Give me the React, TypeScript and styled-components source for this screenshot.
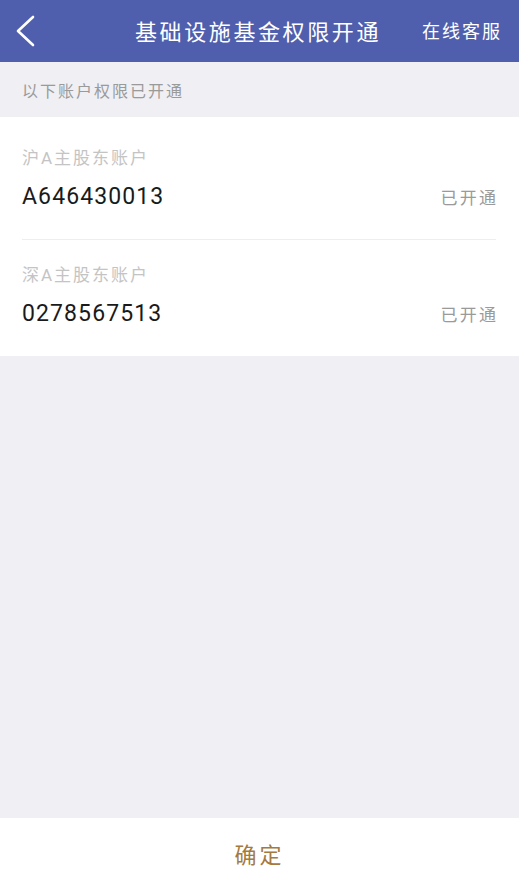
import React from "react";
import styled, { createGlobalStyle } from "styled-components";

const GlobalStyle = createGlobalStyle`
  html, body {
    margin: 0;
    padding: 0;
    background: #efeff4;
    font-family: Roboto, "Noto Sans CJK SC", sans-serif;
  }
`;

const Page = styled.div`
  width: 519px;
  height: 888px;
  display: flex;
  flex-direction: column;
  background: #efeff4;
`;

const Header = styled.div`
  height: 62px;
  background: #4f5fae;
  display: flex;
  align-items: center;
  color: #fff;
`;

const BackButton = styled.div`
  width: 58px;
  height: 62px;
  display: flex;
  align-items: center;
  padding-left: 14px;
  box-sizing: border-box;
`;

const Title = styled.div`
  flex: 1;
  text-align: center;
  font-size: 22px;
  letter-spacing: 2.6px;
  padding-left: 36px;
  margin-top: -3px;
`;

const HeaderLink = styled.div`
  font-size: 18px;
  letter-spacing: 2px;
  padding-right: 17px;
  margin-top: -3px;
`;

const Notice = styled.div`
  height: 55px;
  display: flex;
  align-items: center;
  padding-left: 22px;
  font-size: 16px;
  letter-spacing: 2px;
  color: #9a9a9a;
`;

const Card = styled.div`
  background: #fff;
  padding: 6px 23px 0 22px;
`;

const Row = styled.div<{ last?: boolean }>`
  padding: 24px 0 30px;
  border-bottom: ${(p) => (p.last ? "none" : "1px solid #eeeeee")};
`;

const Label = styled.div`
  font-size: 17px;
  letter-spacing: 2px;
  color: #c4c4c4;
  line-height: 22px;
`;

const Line = styled.div`
  display: flex;
  align-items: center;
  justify-content: space-between;
  margin-top: 14px;
  height: 26px;
`;

const Account = styled.div`
  font-size: 23px;
  letter-spacing: 1.1px;
  color: #1a1a1a;
`;

const Status = styled.div`
  font-size: 17px;
  letter-spacing: 2.3px;
  margin-right: -2.3px;
  color: #9a9a9a;
`;

const Spacer = styled.div`
  flex: 1;
`;

const Footer = styled.div`
  height: 70px;
  background: #fff;
  display: flex;
  align-items: center;
  justify-content: center;
  font-size: 22px;
  letter-spacing: 3px;
  color: #a47a3e;
`;

const accounts = [
  { label: "沪A主股东账户", no: "A646430013" },
  { label: "深A主股东账户", no: "0278567513" },
];

const App: React.FC = () => {
  return (
    <Page>
      <GlobalStyle />
      <Header>
        <BackButton>
          <svg width="22" height="32" viewBox="0 0 22 32">
            <path d="M19 2 L4 16 L19 30" fill="none" stroke="#fff" strokeWidth="2.6" strokeLinecap="round" strokeLinejoin="round" />
          </svg>
        </BackButton>
        <Title>基础设施基金权限开通</Title>
        <HeaderLink>在线客服</HeaderLink>
      </Header>
      <Notice>以下账户权限已开通</Notice>
      <Card>
        {accounts.map((a, i) => (
          <Row key={a.no} last={i === accounts.length - 1}>
            <Label>{a.label}</Label>
            <Line>
              <Account>{a.no}</Account>
              <Status>已开通</Status>
            </Line>
          </Row>
        ))}
      </Card>
      <Spacer />
      <Footer>确定</Footer>
    </Page>
  );
};

export default App;
